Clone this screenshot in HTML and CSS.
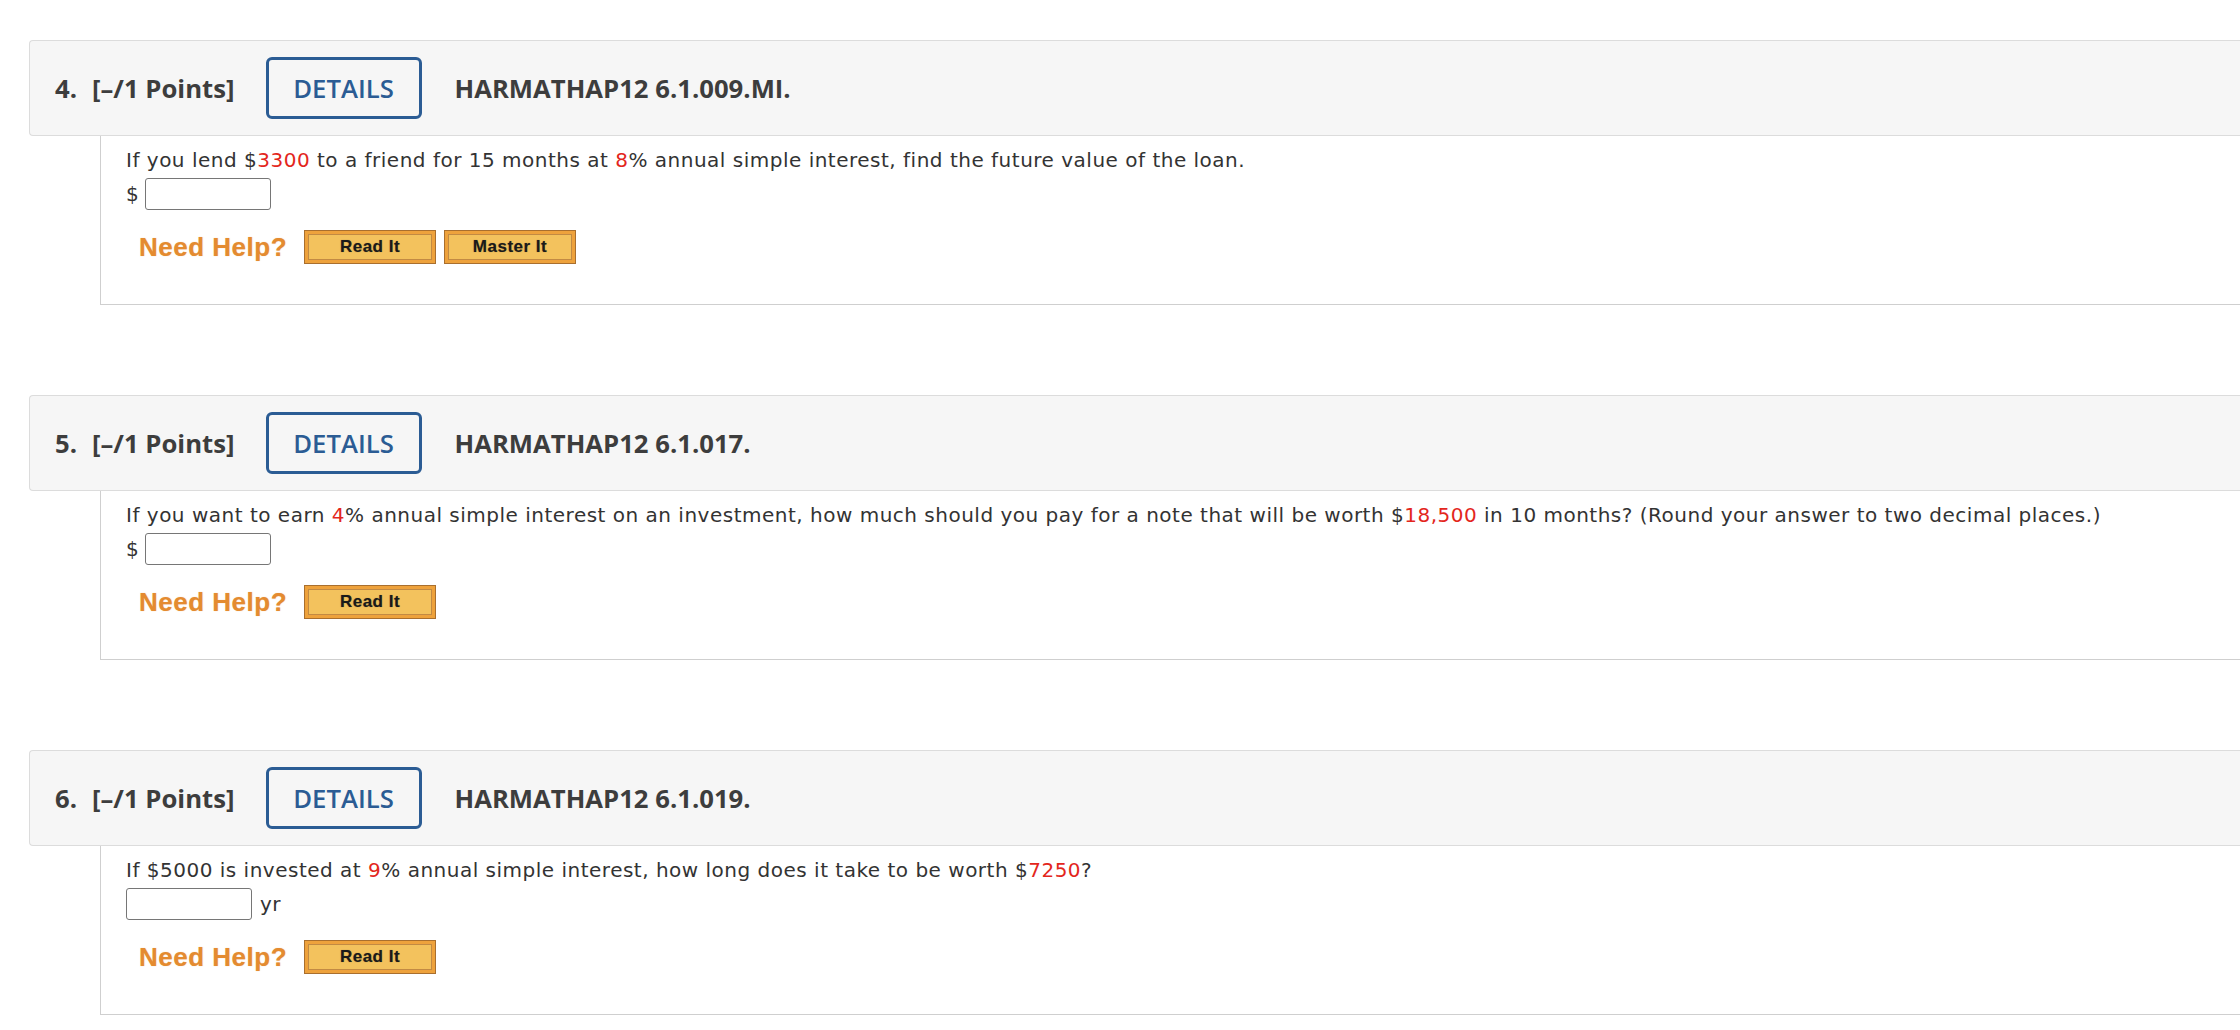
FILE: index.html
```html
<!DOCTYPE html>
<html>
<head>
<meta charset="utf-8">
<link rel="stylesheet" href="styles.css">
</head>
<body>
<div class="page">
  <section class="question">
    <div class="q-head">
      <span class="q-num">4.</span>
      <span class="q-pts">[–/1 Points]</span>
      <span class="details">DETAILS</span>
      <span class="q-code">HARMATHAP12 6.1.009.MI.</span>
    </div>
    <div class="q-body">
      <p class="q-text">If you lend $<span class="red">3300</span> to a friend for 15 months at <span class="red">8</span>% annual simple interest, find the future value of the loan.</p>
      <div class="answer"><span class="unit-pre">$</span><span class="ans"></span></div>
      <div class="help">
        <span class="need">Need Help?</span>
        <span class="btn"><span class="btn-in">Read It</span></span>
        <span class="btn"><span class="btn-in">Master It</span></span>
      </div>
    </div>
  </section>

  <section class="question">
    <div class="q-head">
      <span class="q-num">5.</span>
      <span class="q-pts">[–/1 Points]</span>
      <span class="details">DETAILS</span>
      <span class="q-code">HARMATHAP12 6.1.017.</span>
    </div>
    <div class="q-body">
      <p class="q-text">If you want to earn <span class="red">4</span>% annual simple interest on an investment, how much should you pay for a note that will be worth $<span class="red">18,500</span> in 10 months? (Round your answer to two decimal places.)</p>
      <div class="answer"><span class="unit-pre">$</span><span class="ans"></span></div>
      <div class="help">
        <span class="need">Need Help?</span>
        <span class="btn"><span class="btn-in">Read It</span></span>
      </div>
    </div>
  </section>

  <section class="question">
    <div class="q-head">
      <span class="q-num">6.</span>
      <span class="q-pts">[–/1 Points]</span>
      <span class="details">DETAILS</span>
      <span class="q-code">HARMATHAP12 6.1.019.</span>
    </div>
    <div class="q-body">
      <p class="q-text">If $5000 is invested at <span class="red">9</span>% annual simple interest, how long does it take to be worth $<span class="red">7250</span>?</p>
      <div class="answer"><span class="ans"></span><span class="unit-post">yr</span></div>
      <div class="help">
        <span class="need">Need Help?</span>
        <span class="btn"><span class="btn-in">Read It</span></span>
      </div>
    </div>
  </section>
</div>
</body>
</html>
```

FILE: styles.css
```css
html, body {
  margin: 0;
  padding: 0;
  background: #ffffff;
  overflow: hidden;
}

.page {
  padding-top: 40px;
  padding-left: 29px;
  width: 2260px;
}

.question {
  margin-bottom: 90px;
}

.question:last-child {
  margin-bottom: 0;
}

.q-head {
  display: flex;
  align-items: center;
  height: 94px;
  background: #f6f6f6;
  border: 1px solid #dcdcdc;
  border-right: none;
  border-radius: 4px 0 0 4px;
  padding-left: 25px;
  font-family: "Open Sans", "Liberation Sans", sans-serif;
  font-weight: 700;
  font-size: 25.7px;
  color: #3d3d3d;
}

.q-num {
  margin-right: 15px;
}

.q-pts {
  margin-right: 31px;
}

.details {
  box-sizing: border-box;
  width: 156px;
  height: 62px;
  border: 3px solid #2b5c94;
  border-radius: 6px;
  color: #2b5c94;
  font-weight: 600;
  display: flex;
  align-items: center;
  justify-content: center;
  margin-right: 33px;
  background: #f6f6f6;
}

.q-code {
  color: #3d3d3d;
}

.q-body {
  margin-left: 71px;
  border-left: 1px solid #cfcfcf;
  border-bottom: 1px solid #cfcfcf;
  padding: 10px 0 0 25px;
  height: 158px;
  font-family: "DejaVu Sans", Verdana, sans-serif;
  font-size: 20px;
  letter-spacing: 0.5px;
  color: #333333;
}

.q-text {
  margin: 0;
  line-height: 28px;
}

.red {
  color: #e3261c;
}

.answer {
  display: flex;
  align-items: center;
  height: 32px;
  margin-top: 4px;
}

.unit-pre {
  margin-right: 6px;
}

.unit-post {
  margin-left: 8px;
}

.ans {
  box-sizing: border-box;
  width: 126px;
  height: 32px;
  border: 1px solid #767676;
  border-radius: 3px;
  background: #fff;
}

.help {
  display: flex;
  align-items: center;
  margin-top: 20px;
  padding-left: 13px;
}

.need {
  font-family: "Liberation Sans", Arial, sans-serif;
  font-weight: 700;
  font-size: 26px;
  color: #e48b30;
  margin-right: 17px;
  text-shadow: 0 0 1px rgba(228, 139, 48, 0.5);
}

.btn {
  box-sizing: border-box;
  width: 132px;
  height: 34px;
  border: 1px solid #a96f2e;
  background: #eea23c;
  padding: 3px;
  margin-right: 8px;
  display: flex;
}

.btn-in {
  flex: 1;
  border: 1px solid #c28a43;
  background: #f3c25d;
  display: flex;
  align-items: center;
  justify-content: center;
  font-family: "Liberation Sans", Arial, sans-serif;
  font-weight: 700;
  font-size: 17px;
  color: #1a1a1a;
  text-shadow: 0 0 1px rgba(0, 0, 0, 0.4);
}
```
